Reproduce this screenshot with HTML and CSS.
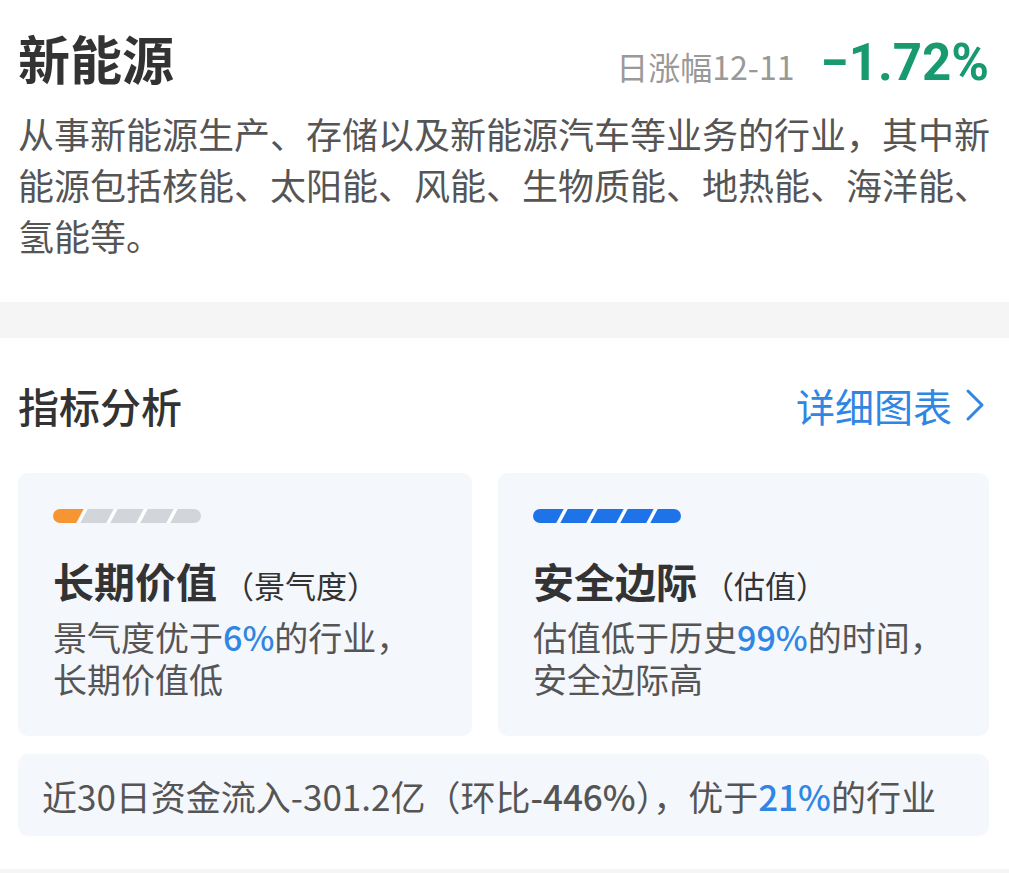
FILE: index.html
```html
<!DOCTYPE html>
<html lang="zh">
<head>
  <meta charset="UTF-8" />
  <meta name="viewport" content="width=device-width, initial-scale=1.0"/>
  <title>新能源</title>
  <link rel="stylesheet" href="styles.css">
</head>
<body>

<!-- 行业概览 -->
<div class="intro">
  <div class="intro-head">
    <h1 class="title">新能源</h1>
    <div class="change">
      <span class="change-label">日涨幅12-11</span>
      <span class="change-value">−1.72%</span>
    </div>
  </div>
  <p class="desc">从事新能源生产、存储以及新能源汽车等业务的行业，其中新能源包括核能、太阳能、风能、生物质能、地热能、海洋能、氢能等。</p>
</div>

<div class="divider"></div>

<!-- 指标分析 -->
<div class="analysis">
  <div class="section-head">
    <h2 class="section-title">指标分析</h2>
    <a class="more" href="#">详细图表
      <svg class="chevron" width="22" height="34" viewBox="0 0 22 34"><path d="M4 3 L18 17 L4 31" fill="none" stroke="currentColor" stroke-width="3" stroke-linecap="round" stroke-linejoin="round"/></svg>
    </a>
  </div>

  <div class="cards">
    <div class="card">
      <div class="level">
        <span class="seg orange"></span>
        <span class="seg"></span>
        <span class="seg"></span>
        <span class="seg"></span>
        <span class="seg"></span>
      </div>
      <div class="card-title">长期价值<span class="card-sub">（景气度）</span></div>
      <p class="card-desc">景气度优于<span class="hl">6%</span>的行业，</p>
      <p class="card-desc">长期价值低</p>
    </div>
    <div class="card">
      <div class="level">
        <span class="seg blue"></span>
        <span class="seg blue"></span>
        <span class="seg blue"></span>
        <span class="seg blue"></span>
        <span class="seg blue"></span>
      </div>
      <div class="card-title">安全边际<span class="card-sub">（估值）</span></div>
      <p class="card-desc">估值低于历史<span class="hl">99%</span>的时间，</p>
      <p class="card-desc">安全边际高</p>
    </div>
  </div>

  <div class="flow">近30日资金流入-301.2亿（环比<span class="num">-446%</span>），优于<span class="hl">21%</span>的行业</div>
</div>

<div class="divider bottom"></div>

</body>
</html>
```

FILE: styles.css
```css
* {
  margin: 0;
  padding: 0;
  box-sizing: border-box;
}

body {
  font-family: "Noto Sans CJK SC", "Noto Sans", sans-serif;
  background: #fff;
  color: #333;
  overflow: hidden;
}

.intro {
  padding: 26px 20px 0 18px;
  height: 302px;
}

.intro-head {
  display: flex;
  justify-content: space-between;
  align-items: baseline;
}

.title {
  font-size: 52px;
  font-weight: 700;
  line-height: 64px;
  color: #333;
}

.change {
  display: flex;
  align-items: baseline;
  gap: 26px;
}

.change-label {
  font-size: 32px;
  color: #999;
}

.change-value {
  font-family: "Roboto", "Noto Sans", sans-serif;
  font-size: 51px;
  font-weight: 700;
  color: #18996f;
}

.desc {
  margin-top: 16px;
  margin-right: -12px;
  font-size: 36px;
  line-height: 51px;
  color: #555;
}

.divider {
  height: 36px;
  background: #f5f5f5;
}

.divider.bottom {
  height: 20px;
}

.analysis {
  padding: 38px 20px 33px 18px;
}

.section-head {
  display: flex;
  justify-content: space-between;
  align-items: center;
}

.section-title {
  font-size: 41px;
  font-weight: 500;
  line-height: 58px;
  color: #333;
}

.more {
  display: flex;
  align-items: center;
  gap: 12px;
  padding-right: 3px;
  font-size: 39px;
  color: #2f86e3;
  text-decoration: none;
}

.chevron {
  color: #2f86e3;
}

.cards {
  margin-top: 39px;
  display: grid;
  grid-template-columns: 454px 1fr;
  gap: 26px;
}

.card {
  background: #f4f7fc;
  border-radius: 10px;
  padding: 36px 20px 32px 35px;
  height: 263px;
}

.level {
  display: flex;
  gap: 4px;
  width: 148px;
  height: 14px;
  border-radius: 7px;
  overflow: hidden;
  background: #fff;
}

.seg {
  flex: 1;
  background: #d2d5d9;
  transform: skewX(-28deg);
}

.seg:first-child { margin-left: -6px; flex: 1.25; }
.seg:last-child { margin-right: -6px; flex: 1.25; }

.seg.orange { background: #f79533; }
.seg.blue { background: #1f73e8; }

.card-title {
  margin-top: 28px;
  margin-bottom: 2px;
  font-size: 41px;
  font-weight: 700;
  line-height: 58px;
  color: #333;
}

.card-sub {
  margin-left: 6px;
  font-size: 31px;
  font-weight: 400;
  color: #333;
}

.card-desc {
  font-size: 34px;
  line-height: 42px;
  color: #555;
  white-space: nowrap;
}

.hl {
  color: #2f86e3;
  font-weight: 500;
}

.num {
  font-weight: 500;
}

.flow {
  margin-top: 18px;
  background: #f4f7fc;
  border-radius: 10px;
  padding: 0 24px;
  height: 82px;
  display: flex;
  align-items: center;
  font-size: 35px;
  color: #555;
  white-space: nowrap;
}
```
